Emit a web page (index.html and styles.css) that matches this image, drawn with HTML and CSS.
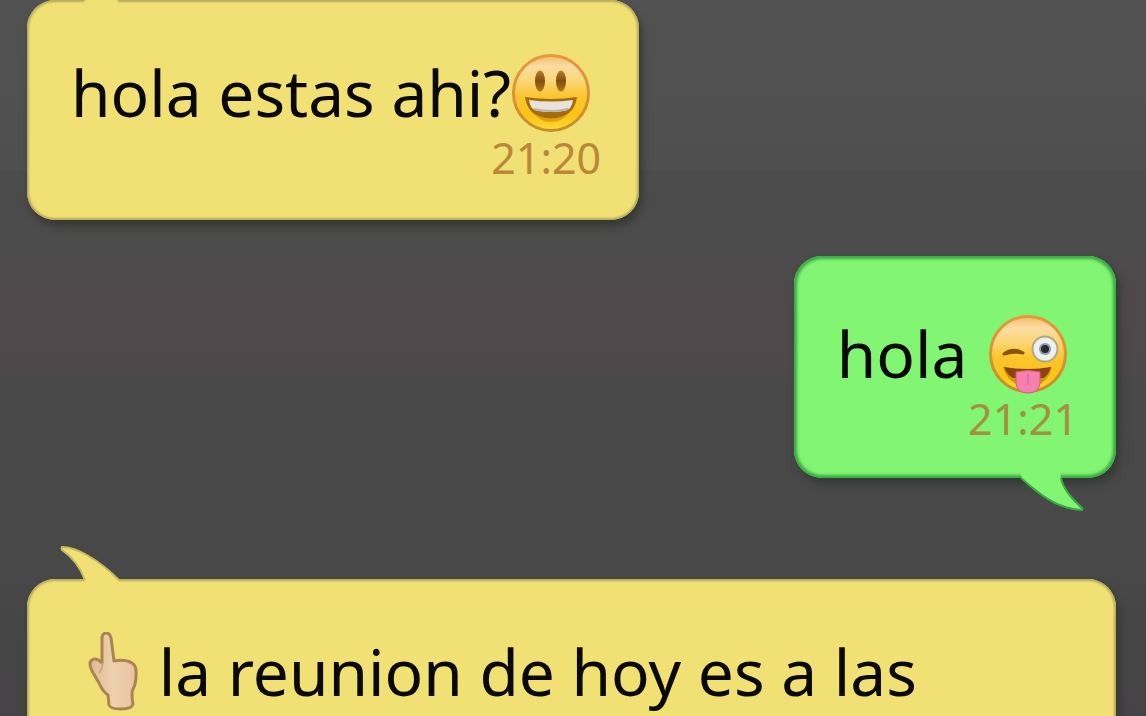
FILE: index.html
```html
<!DOCTYPE html>
<html lang="es">
<head>
<meta charset="utf-8">
<title>Chat</title>
<link rel="stylesheet" href="styles.css">
</head>
<body>
<main class="chat">
  <article class="bubble incoming">
    <svg class="tail" viewBox="0 0 64 38" aria-hidden="true"><path d="M3 3C18 3 40 16 59 36L60 41H27L25 36C23 26 12 12 2 5Z" fill="#f1e074"/><path d="M60 36C40 16 18 3 3 3Q2 4 3 6C12 12 21 23 26 36" fill="none" stroke="#c3b962" stroke-width="2"/></svg>
    <p class="text">hola estas ahi?<svg class="emoji" viewBox="0 0 80 80" aria-hidden="true">
      <defs>
        <linearGradient id="face" x1="0" y1="0" x2="0" y2="1"><stop offset="0" stop-color="#f6bd6c"/><stop offset=".15" stop-color="#fbdca4"/><stop offset=".35" stop-color="#fad673"/><stop offset=".55" stop-color="#fbc52f"/><stop offset=".8" stop-color="#fcc414"/><stop offset="1" stop-color="#fddb38"/></linearGradient>
        <linearGradient id="rim" x1="0" y1="0" x2="0" y2="1"><stop offset="0" stop-color="#e9983a"/><stop offset="1" stop-color="#c78e2b"/></linearGradient>
        <linearGradient id="eye" x1="0" y1="0" x2="0" y2="1"><stop offset="0" stop-color="#b87f2c"/><stop offset=".5" stop-color="#80500e"/><stop offset="1" stop-color="#b87517"/></linearGradient>
      </defs>
      <circle cx="40" cy="40" r="37.500" fill="url(#face)" stroke="url(#rim)" stroke-width="3"/>
      <ellipse cx="29" cy="28" rx="5" ry="10.500" fill="url(#eye)"/>
      <ellipse cx="50" cy="28" rx="5" ry="10.500" fill="url(#eye)"/>
      <path d="M14 44Q40 48 66 44Q63 65 40 66Q17 65 14 44Z" fill="#a66b0b"/>
      <path d="M22 60Q40 71 58 60Q51 69 40 69Q29 69 22 60Z" fill="#dfa012"/>
      <path d="M18 47Q40 50 62 47Q61 57 53 58Q40 60 27 58Q19 57 18 47Z" fill="#e8e3dc"/>
      <path d="M23 56Q40 60 57 56" fill="none" stroke="#bcb2ad" stroke-width="2"/>
    </svg></p>
    <time class="time">21:20</time>
  </article>

  <article class="bubble outgoing">
    <svg class="tail" viewBox="0 0 66 40" aria-hidden="true"><path d="M1 -3L3 5C14 16 36 35 64 36C52 25 44 14 42 5L41 -3Z" fill="#82f573"/><path d="M2 4C20 20 38 35 63 36Q64 35 63 34C53 25 44 15 42 4" fill="none" stroke="#39a944" stroke-width="2"/></svg>
    <p class="text">hola <svg class="emoji" viewBox="0 0 80 80" aria-hidden="true">
      <circle cx="40" cy="40" r="37.500" fill="url(#face)" stroke="url(#rim)" stroke-width="3"/>
      <path d="M16 40Q25 33 35 39Q25 37 16 40Z" fill="#875706" stroke="#875706" stroke-width="3" stroke-linejoin="round"/>
      <circle cx="57" cy="35" r="12.500" fill="#edf0f1" stroke="#b3a681" stroke-width="2"/>
      <circle cx="57" cy="35" r="6" fill="#929ba3"/><circle cx="57" cy="35" r="4" fill="#262b2e"/>
      <path d="M15 53Q40 60 64 53Q60 71 40 74Q20 71 15 53Z" fill="#d7940c"/>
      <path d="M16 53Q40 57 63 53Q60 62 55 64H25Q19 61 16 53Z" fill="#8b4315"/>
      <path d="M28 58Q40 55 52 58V69Q51 79 40 79Q29 79 28 69Z" fill="#f77fae" stroke="#d75b84" stroke-width="1"/>
      <path d="M40 60V71" stroke="#e56f9c" stroke-width="2"/>
    </svg></p>
    <time class="time">21:21</time>
  </article>

  <article class="bubble incoming">
    <svg class="tail" viewBox="0 0 64 38" aria-hidden="true"><path d="M3 3C18 3 40 16 59 36L60 41H27L25 36C23 26 12 12 2 5Z" fill="#f1e074"/><path d="M60 36C40 16 18 3 3 3Q2 4 3 6C12 12 21 23 26 36" fill="none" stroke="#c3b962" stroke-width="2"/></svg>
    <p class="text"><svg class="emoji hand" viewBox="0 0 66 80" aria-hidden="true">
      <defs><linearGradient id="skin"><stop offset="0" stop-color="#ddba94"/><stop offset=".5" stop-color="#eed1b0"/><stop offset="1" stop-color="#e8c2a2"/></linearGradient></defs>
      <path d="M29 5Q30 1 33 1Q37 1 38 6L41 29Q52 27 59 31Q64 34 63 43Q63 52 60 57Q58 61 60 72Q59 77 48 77Q37 77 36 73L35 63Q30 60 26 51L19 39Q15 30 19 28Q23 25 29 31Z" fill="url(#skin)" stroke="#ad8450" stroke-width="3" stroke-linejoin="round"/>
      <path d="M29 31Q30 37 26 41" fill="none" stroke="#d0a67e" stroke-width="2"/>
    </svg> la reunion de hoy es a las</p>
  </article>
</main>
</body>
</html>
```

FILE: styles.css
```css
body {
  margin: 0;
  height: 100vh;
  overflow: hidden;
  background: linear-gradient(#525252 0, #4f4f4f 170px, #4c4c4c 171px, #4c4b4b 260px, #4f494b 290px, #4e484a 365px, #494949 385px, #484848 570px, #454345 100%);
  font-family: "Noto Sans", "Open Sans", sans-serif;
}

.chat {
  display: flex;
  flex-direction: column;
  align-items: flex-start;
  gap: 36px;
  padding: 0 30px 0 27px;
}

.bubble {
  position: relative;
  box-sizing: border-box;
  border-radius: 28px;
}

.incoming {
  padding: 53px 38px 37px 44px;
  background: #f1e074;
  box-shadow: inset 0 0 2px 2px #b5ac5c, 3px 6px 8px #363834;
}

.outgoing {
  align-self: flex-end;
  margin-bottom: 33px;
  padding: 58px 38px 34px 43px;
  background: #82f573;
  box-shadow: inset 0 0 3px 3px #39a944, 4px 6px 8px #343a35;
}

.outgoing + .incoming {
  align-self: stretch;
  margin-top: 32px;
}

.text {
  display: flex;
  margin: 0;
  color: #090900;
  font-size: 64px;
  line-height: 80px;
  white-space: pre;
}

.emoji {
  flex: none;
  width: 80px;
  height: 80px;
  margin-right: 10px;
}

.outgoing .emoji {
  margin-left: 4px;
}

.hand {
  width: 66px;
  margin: 0 3px 0 2px;
}

.time {
  display: block;
  color: #b9883a;
  font-size: 43px;
  line-height: 50px;
  text-align: right;
}

.outgoing .time {
  color: #a39040;
}

.tail {
  position: absolute;
  width: 64px;
  height: 38px;
  overflow: visible;
}

.incoming .tail {
  top: -35px;
  left: 32px;
}

.outgoing .tail {
  right: 31px;
  bottom: -36px;
  width: 66px;
  height: 40px;
}
```
